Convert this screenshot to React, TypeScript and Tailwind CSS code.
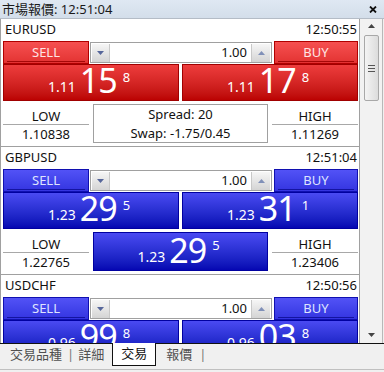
import React from "react";

type Quote = {
  symbol: string;
  time: string;
  color: "red" | "blue";
  pre: string;
  sell: [string, string];
  buy: [string, string];
  low: string;
  high: string;
  mid?: { kind: "spread"; spread: string; swap: string } | { kind: "price"; big: string; sup: string };
};

const QUOTES: Quote[] = [
  {
    symbol: "EURUSD",
    time: "12:50:55",
    color: "red",
    pre: "1.11",
    sell: ["15", "8"],
    buy: ["17", "8"],
    low: "1.10838",
    high: "1.11269",
    mid: { kind: "spread", spread: "Spread: 20", swap: "Swap: -1.75/0.45" },
  },
  {
    symbol: "GBPUSD",
    time: "12:51:04",
    color: "blue",
    pre: "1.23",
    sell: ["29", "5"],
    buy: ["31", "1"],
    low: "1.22765",
    high: "1.23406",
    mid: { kind: "price", big: "29", sup: "5" },
  },
  {
    symbol: "USDCHF",
    time: "12:50:56",
    color: "blue",
    pre: "0.96",
    sell: ["99", "8"],
    buy: ["03", "8"],
    low: "0.96512",
    high: "0.97210",
  },
];

const priceBg = {
  red: "bg-linear-to-b from-[#ee3c3c] to-[#bb0202] border-[#a00000]",
  blue: "bg-linear-to-b from-[#4a4af2] to-[#0606b2] border-[#0000a0]",
};
const headBg = {
  red: "bg-linear-to-b from-[#f65050] to-[#e33232] border-[#b00000] text-[#ffe4e4]",
  blue: "bg-linear-to-b from-[#5252f6] to-[#3434e0] border-[#1010b0] text-[#dfe4ff]",
};
const headLine = {
  red: "border-[#a40808]",
  blue: "border-[#1414a0]",
};

function Price({ pre, big, sup }: { pre: string; big: string; sup: string }) {
  return (
    <div className="flex h-full items-end justify-center pb-[3px] text-white">
      <span className="text-[14px] leading-none mb-[3px]">{pre}</span>
      <span className="text-[34px] leading-none ml-[4px] tracking-[-1px]">{big}</span>
      <span className="text-[13px] leading-none self-start mt-[6px] ml-[6px] mr-[4px]">{sup}</span>
    </div>
  );
}

function Head({ label, color }: { label: string; color: "red" | "blue" }) {
  return (
    <div className={`h-[23px] border flex flex-col ${headBg[color]}`}>
      <div className="flex-1 flex items-center justify-center pt-[1px] text-[13px] leading-none">{label}</div>
      <div className={`mx-[3px] mb-[1px] border-b ${headLine[color]}`} />
    </div>
  );
}

function Card({ q }: { q: Quote }) {
  return (
    <div className="h-[128px] shrink-0 border-b border-[#a0a0a0] pl-[2px] bg-white">
      <div className="h-[22px] flex items-center justify-between pl-[2px] pr-[2px] text-[13px] text-[#111]">
        <span>{q.symbol}</span>
        <span>{q.time}</span>
      </div>
      <div className="w-[355px]">
        <div className="flex h-[23px]">
          <div className="w-[86px]">
            <Head label="SELL" color={q.color} />
          </div>
          <div className="ml-[1px] w-[182px] h-[21px] mt-[1px] border border-[#a0a0a0] bg-white flex items-center">
            <div className="ml-[1px] w-[18px] h-[18px] bg-linear-to-b from-[#f6f6f6] to-[#d4d4d4] border-r border-[#c8c8c8] flex items-center justify-center">
              <svg width="7" height="4" viewBox="0 0 7 4"><path d="M0 0h7L3.5 4z" fill="#56669a" /></svg>
            </div>
            <div className="flex-1 text-right pr-[4px] text-[13px] text-[#111]">1.00</div>
            <div className="mr-[1px] w-[19px] h-[18px] bg-linear-to-b from-[#f6f6f6] to-[#d4d4d4] border-l border-[#c8c8c8] flex items-center justify-center">
              <svg width="7" height="4" viewBox="0 0 7 4"><path d="M0 4h7L3.5 0z" fill="#8090b8" /></svg>
            </div>
          </div>
          <div className="ml-[2px] w-[84px]">
            <Head label="BUY" color={q.color} />
          </div>
        </div>
        <div className="flex h-[37px] gap-[3px]">
          <div className={`flex-1 border ${priceBg[q.color]}`}>
            <Price pre={q.pre} big={q.sell[0]} sup={q.sell[1]} />
          </div>
          <div className={`flex-1 border ${priceBg[q.color]}`}>
            <Price pre={q.pre} big={q.buy[0]} sup={q.buy[1]} />
          </div>
        </div>
        <div className="flex h-[39px] mt-[3px] gap-[4px] text-[13px] text-[#111]">
          <div className="w-[86px] flex flex-col">
            <div className="h-[19px] flex items-end justify-center leading-none">LOW</div>
            <div className="mt-[1px] border-b border-[#a8a8a8]" />
            <div className="flex-1 flex items-center justify-center leading-none">{q.low}</div>
          </div>
          {q.mid && q.mid.kind === "spread" && (
            <div className="w-[175px] border border-[#a0a0a0] flex flex-col items-center justify-center gap-[6px] leading-none">
              <span>{q.mid.spread}</span>
              <span>{q.mid.swap}</span>
            </div>
          )}
          {q.mid && q.mid.kind === "price" && (
            <div className={`w-[175px] border ${priceBg[q.color]}`}>
              <Price pre={q.pre} big={q.mid.big} sup={q.mid.sup} />
            </div>
          )}
          {!q.mid && <div className="w-[175px]" />}
          <div className="w-[86px] flex flex-col">
            <div className="h-[19px] flex items-end justify-center leading-none">HIGH</div>
            <div className="mt-[1px] border-b border-[#a8a8a8]" />
            <div className="flex-1 flex items-center justify-center leading-none">{q.high}</div>
          </div>
        </div>
      </div>
    </div>
  );
}

export default function App() {
  return (
    <div
      className="w-[384px] h-[372px] overflow-hidden bg-[#f0f0f0] flex flex-col"
      style={{ fontFamily: "'Noto Sans', 'Noto Sans CJK TC', sans-serif" }}
    >
      {/* title bar */}
      <div className="h-[19px] shrink-0 bg-linear-to-b from-[#dfe8f3] to-[#d3deea] border-b border-[#b4bcc6] flex items-center justify-between pl-[2px] pr-[7px]">
        <span className="text-[13px] leading-none text-[#1a1a1a]">市場報價: 12:51:04</span>
        <svg width="8" height="7" viewBox="0 0 8 7">
          <path d="M1 0.5l6 6M7 0.5l-6 6" stroke="#111" strokeWidth="1.8" />
        </svg>
      </div>

      {/* body */}
      <div className="flex h-[324px] shrink-0">
        <div className="w-[359px] border-l border-[#a0a0a0] bg-white overflow-hidden flex flex-col">
          {QUOTES.map((q) => (
            <Card key={q.symbol} q={q} />
          ))}
        </div>
        <div className="w-[24px] border-l border-[#a0a0a0] border-r border-r-[#b8b8b8] bg-[#f2f2f2] flex flex-col items-center">
          <svg className="mt-[5px]" width="7" height="4" viewBox="0 0 7 4"><path d="M0 4h7L3.5 0z" fill="#444" /></svg>
          <div className="mt-[7px] w-[15px] h-[66px] rounded-[2px] border border-[#a8a8a8] bg-linear-to-r from-[#f4f4f4] to-[#dcdcdc] flex flex-col items-center justify-center gap-[2px]">
            <div className="w-[7px] border-t border-[#555]" />
            <div className="w-[7px] border-t border-[#555]" />
            <div className="w-[7px] border-t border-[#555]" />
          </div>
          <div className="flex-1" />
          <svg className="mb-[6px]" width="7" height="4" viewBox="0 0 7 4"><path d="M0 0h7L3.5 4z" fill="#444" /></svg>
        </div>
      </div>

      {/* tab bar */}
      <div className="flex-1 border-t border-[#111] flex items-start pl-[10px] text-[13px] text-[#505050]">
        <span className="h-[22px] flex items-center">交易品種</span>
        <span className="h-[22px] flex items-center ml-[5px] mr-[4px] text-[#777]">|</span>
        <span className="h-[22px] flex items-center">詳細</span>
        <span className="ml-[8px] w-[44px] h-[23px] -mt-[1px] bg-white border-x border-b border-[#111] flex items-center justify-center text-[#111]">交易</span>
        <span className="ml-[10px] h-[22px] flex items-center">報價</span>
        <span className="h-[22px] flex items-center ml-[7px] text-[#777]">|</span>
      </div>
      <div className="h-[3px] shrink-0 border-t border-[#c0c0c0]" />
    </div>
  );
}
